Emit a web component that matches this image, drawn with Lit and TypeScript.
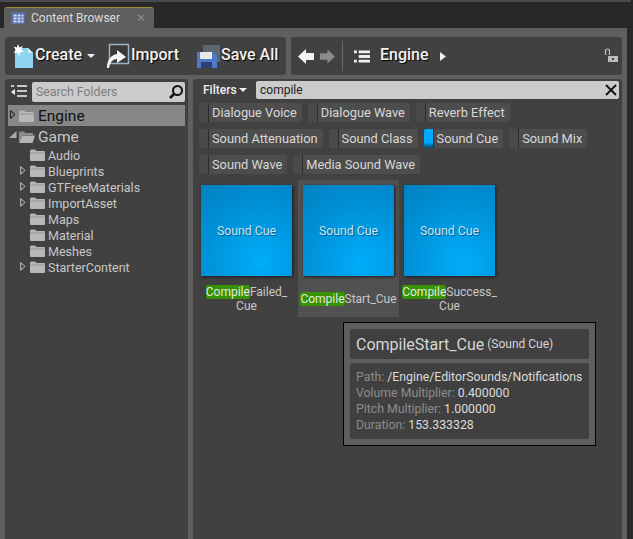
import { LitElement, html, css, svg } from "lit";
import { customElement } from "lit/decorators.js";

const folder = (open = false) => html`<svg class="fld" width="17" height="14" viewBox="0 0 17 14">
  ${open
    ? svg`<path d="M1 3 Q1 1.500 2.500 1.500 H6 L7.500 3 H15 V5 H5 L3 12.500 H1Z" fill="#8c8c8c"/><path d="M4.500 5.500 H17 L14.500 13 H1.500Z" fill="#b5b5b5"/>`
    : svg`<path d="M1 3 Q1 1.500 2.500 1.500 H6 L7.500 3 H15 Q16 3 16 4 V12 Q16 13 15 13 H2 Q1 13 1 12Z" fill="#b8b8b8"/><path d="M1 5 H16" stroke="#8a8a8a" stroke-width=".8"/>`}
</svg>`;
const tri = html`<svg class="tri" width="6" height="9" viewBox="0 0 6 9"><path d="M.7 .7 L5 4.500 L.7 8.300Z" fill="none" stroke="#c8c8c8" stroke-width="1"/></svg>`;

const subs: [string, boolean][] = [
  ["Audio", false], ["Blueprints", true], ["GTFreeMaterials", true], ["ImportAsset", true],
  ["Maps", false], ["Material", false], ["Meshes", false], ["StarterContent", true],
];
const chips: [string, boolean][][] = [
  [["Dialogue Voice", false], ["Dialogue Wave", false], ["Reverb Effect", false]],
  [["Sound Attenuation", false], ["Sound Class", false], ["Sound Cue", true], ["Sound Mix", false]],
  [["Sound Wave", false], ["Media Sound Wave", false]],
];

@customElement("app-root")
export class AppRoot extends LitElement {
  static styles = css`
    :host { display: block; width: 633px; height: 539px; overflow: hidden; background: #2a2a2a; font-family: Roboto, "Liberation Sans", sans-serif; color: #d2d2d2; position: relative; }
    .topline { height: 2px; background: #4a4a4a; margin-right: 2px; }
    .tabbar { height: 26px; display: flex; align-items: flex-end; padding-left: 4px; background: #282828; }
    .tab { width: 150px; height: 21px; box-sizing: border-box; background: #5e5e5e; border-top: 1px solid #a08c3c; border-radius: 3px 3px 0 0; display: flex; align-items: center; gap: 5px; padding-left: 6px; font-size: 12px; color: #dcdcdc; }
    .tab .x { margin-left: 11px; font-size: 12px; color: #8a8a8a; }
    .frame { width: 627px; height: 511px; box-sizing: border-box; background: #5f5f5f; padding: 9px 5px 0 5px; display: flex; flex-direction: column; gap: 4px; }
    .bars { display: flex; gap: 5px; height: 38px; }
    .bar { background: #414141; border-radius: 3px; display: flex; align-items: center; font-size: 16px; font-weight: 500; color: #f2f2f2; text-shadow: 1px 1px 1px #000; }
    .bar.left { width: 281px; flex: none; padding-left: 6px; box-sizing: border-box; }
    .bar.right { flex: 1; position: relative; padding-left: 7px; }
    .btn { display: flex; align-items: center; }
    .t { margin-bottom: 4px; }
    .t1 { margin-left: 1px; }
    .caret { width: 0; height: 0; border-left: 4px solid transparent; border-right: 4px solid transparent; border-top: 4px solid #eee; }
    .bar .caret { margin-left: 5px; margin-bottom: 1px; }
    .m11 { margin-left: 11px; }
    .m17 { margin-left: 17px; }
    .m4 { margin-left: 4px; }
    .m10 { margin-left: 10px; }
    .lock { position: absolute; right: 4px; top: 11px; }
    .sep { width: 1px; height: 30px; background: #6a6a6a; margin: 0 11px 0 7px; }
    .panels { display: flex; gap: 5px; flex: 1; min-height: 0; }
    .tree { width: 183px; flex: none; background: #414141; border-radius: 3px 3px 0 0; padding: 3px 3px 0 3px; box-sizing: border-box; }
    .searchrow { display: flex; align-items: center; gap: 5px; height: 20px; padding-left: 3px; }
    .input { background: #cbcbcb; border-radius: 2px; height: 18px; display: flex; align-items: center; color: #7e7e7e; font-size: 12.300px; }
    .searchrow .input { width: 153px; height: 20px; padding-left: 4px; box-sizing: border-box; justify-content: space-between; padding-right: 1px; }
    .node { display: flex; align-items: center; position: relative; color: #c8c8c8; }
    .root { height: 21px; font-size: 15.500px; padding-left: 10px; gap: 3px; }
    .root .tri { position: absolute; left: 2px; top: 5px; }
    .sel { background: #878787; color: #111; margin-top: 3px; }
    .sub { height: 16px; font-size: 12.500px; padding-left: 21px; gap: 2px; }
    .sub .tri { position: absolute; left: 12px; top: 3px; }
    .open-tri { position: absolute; left: 1px; top: 5px; }
    .content { flex: 1; background: #414141; position: relative; border-radius: 3px 3px 0 0; padding-top: 2px; box-sizing: border-box; }
    .filterrow { display: flex; align-items: center; height: 18px; padding-left: 10px; }
    .filters { font-size: 12px; font-weight: 500; color: #eee; display: flex; align-items: center; gap: 2px; width: 53px; flex: none; }
    .filterrow .input { flex: 1; color: #222; font-size: 12px; padding: 0 2px 0 4px; justify-content: space-between; margin-right: 3px; }
    .chips { display: flex; flex-direction: column; gap: 6px; margin-top: 4px; }
    .chiprow { display: flex; gap: 6px; padding-left: 6px; height: 20px; }
    .chip { background: #4d4d4d; border-radius: 2px; display: flex; align-items: center; font-size: 12.800px; color: #d8d8d8; height: 19px; padding-right: 5px; }
    .chip i { display: block; width: 9px; height: 19px; background: #4a4a4a; border-right: 1px solid #2c2c2c; margin-right: 3px; border-radius: 2px 0 0 2px; flex: none; }
    .chip.on i { background: linear-gradient(#00a8ff 0 70%, #0074b4 85%, #004a75); }
    .assets { display: flex; margin-top: 5px; padding-left: 3px; }
    .asset { width: 101px; height: 137px; box-sizing: border-box; padding-top: 5px; display: flex; flex-direction: column; align-items: center; font-size: 12px; line-height: 14px; color: #c8c8c8; text-align: center; flex: none; }
    .asset.hot { background: #515151; margin-left: 1px; }
    .thumb { width: 91px; height: 91px; flex: none; background: radial-gradient(circle at 65% 85%, #00adfa, #0090d6 60%, #007fbd 105%); box-shadow: 1px 1px 3px #1b1b1b; display: flex; align-items: center; justify-content: center; color: #cfe3ee; font-size: 12.300px; text-shadow: 1px 1px 1px #035d8a; }
    .label { margin-top: 9px; }
    .hot .label { margin-top: 16px; }
    mark { background: #359400; color: #e6e6e6; border-radius: 2px; }
    .tip { position: absolute; left: 150px; top: 243px; width: 253px; height: 124px; box-sizing: border-box; background: #5e5e5e; border: 1px solid #000; padding: 6px; display: flex; flex-direction: column; gap: 4px; }
    .box { background: #404040; border-radius: 2px; }
    .tiphead { height: 30px; flex: none; display: flex; align-items: center; padding-left: 6px; font-size: 16px; color: #d6d6d6; gap: 3px; }
    .tiphead small { font-size: 12px; }
    .tipbody { flex: 1; padding: 6px 0 0 6px; font-size: 12.300px; line-height: 16px; color: #dcdcdc; white-space: nowrap; }
    .tipbody span { color: #8c8c8c; margin-right: 3px; }
  `;

  render() {
    return html`
      <div class="topline"></div>
      <div class="tabbar"><div class="tab">
        <svg width="16" height="14" viewBox="0 0 16 14"><path d="M1.500 1 H15 L14.500 13 H1Z" fill="#5a6fae"/><path d="M3.500 3.500 h3 v2 h-3z M7.500 3.500 h3 v2 h-3z M11.500 3.500 h2 v2 h-2z M3.500 6.500 h3 v2 h-3z M7.500 6.500 h3 v2 h-3z M11.500 6.500 h2 v2 h-2z M3.500 9.500 h3 v2 h-3z M7.500 9.500 h3 v2 h-3z M11.500 9.500 h2 v2 h-2z" fill="#d5dcf2"/></svg>
        <span>Content Browser</span><span class="x">✕</span>
      </div></div>
      <div class="frame">
        <div class="bars">
          <div class="bar left">
            <div class="btn">
              <svg width="24" height="26" viewBox="0 0 24 26"><path d="M4 5 H17 L22 10 V25 H4Z" fill="#8fd3f0"/><path d="M17 5 V10 H22Z" fill="#d8f1fb"/><path d="M7 1 L8.500 4.500 L12 3 L10 6.500 L13 9 L9.500 9 L8 13 L6.500 9.500 L2.500 10 L5 7 L2.500 3.500 L6 4.500Z" fill="#fff"/></svg>
              <span class="t">Create</span><span class="caret"></span>
            </div>
            <div class="btn m11">
              <svg width="24" height="26" viewBox="0 0 24 26"><rect x="3.500" y="1.500" width="19" height="19" fill="#3a3a3a" stroke="#9fb0cc" stroke-width="1.500"/><path d="M1 25 C1 17 5 12 11 11 V7 L20 14 L11 20 V16 C7 16 4 19 3 25Z" fill="#f4f4f4"/></svg>
              <span class="t t1">Import</span>
            </div>
            <div class="btn m17">
              <svg width="24" height="24" viewBox="0 0 24 24"><rect x="7" y="1" width="17" height="17" rx="1" fill="#5e6572"/><path d="M1 8 H17 L21 11 V24 H1Z" fill="#4f78c9"/><rect x="4" y="8" width="12" height="7" fill="#e8e8e8"/><rect x="5" y="18" width="11" height="6" fill="#2f3f70"/></svg>
              <span class="t t1">Save All</span>
            </div>
          </div>
          <div class="bar right">
            <svg width="17" height="15" viewBox="0 0 17 15"><path d="M0 7.500 L8 0 V4 H16 V11 H8 V15Z" fill="#f4f4f4"/></svg>
            <svg class="m4" width="16" height="15" viewBox="0 0 17 15"><path d="M17 7.500 L9 0 V4 H1 V11 H9 V15Z" fill="#8c8c8c"/></svg>
            <span class="sep"></span>
            <svg width="16" height="13" viewBox="0 0 17 13"><path d="M0 0 h3 v3 h-3z M5 0 h12 v3 h-12z M5 5 h12 v3 h-12z M0 10 h3 v3 h-3z M5 10 h12 v3 h-12z" fill="#f0f0f0" /></svg>
            <span class="t m10">Engine</span>
            <svg class="m11" width="6" height="9" viewBox="0 0 6 9"><path d="M0 0 L6 4.500 L0 9Z" fill="#eee"/></svg>
            <svg class="lock" width="14" height="15" viewBox="0 0 14 15"><path d="M1.500 7 V3 Q1.500 1 3.500 1 Q5.500 1 5.500 3 V7" fill="none" stroke="#bdbdbd" stroke-width="1.200"/><rect x="4" y="8" width="10" height="6" fill="#bdbdbd"/><rect x="8" y="10" width="2" height="2" fill="#444"/></svg>
          </div>
        </div>
        <div class="panels">
          <div class="tree">
            <div class="searchrow">
              <svg width="16" height="14" viewBox="0 0 16 14"><path d="M6 0 h10 v2 h-10z M6 5 h10 v2 h-10z M6 10 h10 v2 h-10z M0 0 h3 v2 h-3z" fill="#c8c8c8"/><path d="M0 7 L4 4 V10Z" fill="#eee"/></svg>
              <div class="input"><span>Search Folders</span>
                <svg width="16" height="16" viewBox="0 0 16 16"><circle cx="9.500" cy="6.500" r="4.500" fill="none" stroke="#111" stroke-width="2"/><path d="M6 10 L2 14" stroke="#111" stroke-width="2.500"/></svg></div>
            </div>
            <div class="node root sel">
              <svg class="tri" width="6" height="9" viewBox="0 0 6 9"><path d="M.7 .7 L5 4.500 L.7 8.300Z" fill="none" stroke="#111" stroke-width="1"/></svg>
              ${folder()}<span>Engine</span></div>
            <div class="node root">
              <svg class="open-tri" width="8" height="8" viewBox="0 0 8 8"><path d="M7.500 0 V7 H0Z" fill="#ababab"/></svg>
              ${folder(true)}<span>Game</span></div>
            ${subs.map(([n, t]) => html`<div class="node sub">${t ? tri : ""}${folder()}<span>${n}</span></div>`)}
          </div>
          <div class="content">
            <div class="filterrow">
              <div class="filters">Filters<span class="caret"></span></div>
              <div class="input"><span>compile</span>
                <svg width="12" height="12" viewBox="0 0 12 12"><path d="M1 1 L11 11 M11 1 L1 11" stroke="#111" stroke-width="1.800"/></svg></div>
            </div>
            <div class="chips">
              ${chips.map((r) => html`<div class="chiprow">${r.map(([n, on]) => html`<div class="chip ${on ? "on" : ""}"><i></i>${n}</div>`)}</div>`)}
            </div>
            <div class="assets">
              <div class="asset"><div class="thumb">Sound Cue</div><div class="label"><mark>Compile</mark>Failed_<br>Cue</div></div>
              <div class="asset hot"><div class="thumb">Sound Cue</div><div class="label"><mark>Compile</mark>Start_Cue</div></div>
              <div class="asset"><div class="thumb">Sound Cue</div><div class="label"><mark>Compile</mark>Success_<br>Cue</div></div>
            </div>
            <div class="tip">
              <div class="box tiphead">CompileStart_Cue <small>(Sound Cue)</small></div>
              <div class="box tipbody">
                <span>Path:</span>/Engine/EditorSounds/Notifications<br>
                <span>Volume Multiplier:</span>0.400000<br>
                <span>Pitch Multiplier:</span>1.000000<br>
                <span>Duration:</span>153.333328
              </div>
            </div>
          </div>
        </div>
      </div>
    `;
  }
}
